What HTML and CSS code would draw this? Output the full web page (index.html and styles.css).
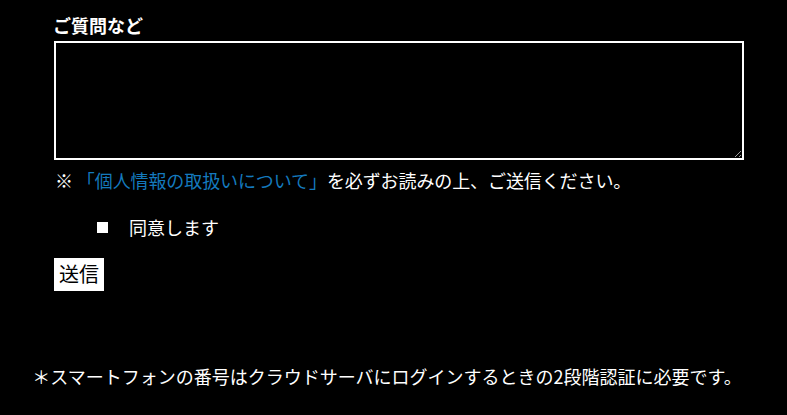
FILE: index.html
```html
<!DOCTYPE html>
<html>
<head>
<meta name="viewport" content="width=device-width, initial-scale=1">
<link rel="stylesheet" href="styles.css">
</head>
<body>
<div class="container">
  <label class="field-label" for="question">ご質問など</label>
  <textarea id="question" name="question" class="question"></textarea>

  <p class="note">※ <a href="#" class="privacy">「個人情報の取扱いについて」</a>を必ずお読みの上、ご送信ください。</p>

  <div class="agree">
    <input type="checkbox" id="agree" name="agree" class="agree-box">
    <label for="agree">同意します</label>
  </div>

  <input type="submit" value="送信" class="send">
</div>

<p class="footnote">＊スマートフォンの番号はクラウドサーバにログインするときの2段階認証に必要です。</p>
</body>
</html>
```
FILE: styles.css
```css
* {box-sizing: border-box;}

body {
  margin: 0;
  background: #000;
  color: #fff;
  font-family: "Noto Sans CJK JP", "Noto Sans", sans-serif;
  font-size: 18px;
}

.container {
  padding: 13px 43px 0 54px;
}

.field-label {
  display: block;
  font-weight: bold;
  font-size: 18px;
  line-height: 25px;
  margin-left: -1px;
}

.question {
  display: block;
  width: 690px;
  height: 119px;
  margin-top: 3px;
  background: #000;
  color: #fff;
  border: 2px solid #fff;
  resize: vertical;
  outline: none;
}

.note {
  margin: 7px 0 0 1px;
  line-height: 26px;
  letter-spacing: -0.1px;
}

.privacy {
  color: #1479bd;
  text-decoration: none;
}

.agree {
  display: flex;
  align-items: center;
  gap: 21px;
  margin: 21px 0 0 43px;
  line-height: 26px;
}

.agree-box {
  -webkit-appearance: none;
  appearance: none;
  width: 11px;
  height: 11px;
  margin: 0;
  background: #fff;
  border: none;
}

.send {
  display: block;
  margin-top: 18px;
  padding: 3px 5px 4px;
  background: #fff;
  color: #000;
  border: none;
  font-family: inherit;
  font-size: 20px;
  line-height: 26px;
  cursor: pointer;
}

.footnote {
  margin: 72px 0 0;
  padding-right: 13px;
  text-align: center;
  line-height: 26px;
}
```
